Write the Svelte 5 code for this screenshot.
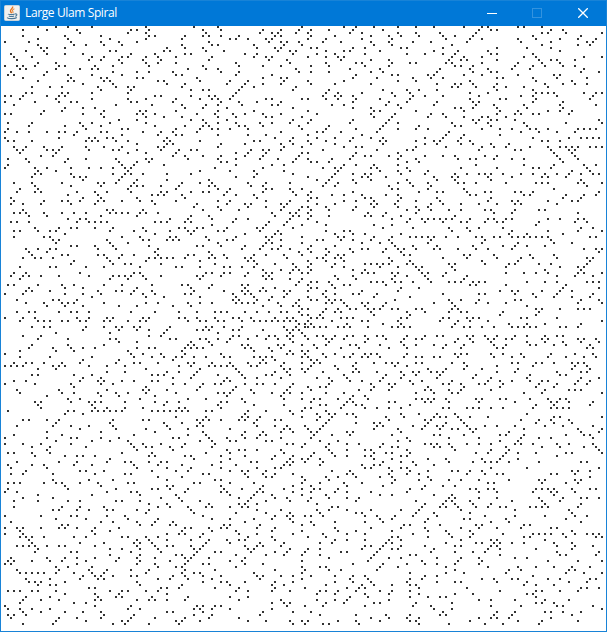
<script>
  const CELL = 3;
  const LIMIT = 40000;

  function isPrime(n) {
    if (n <= 2 || n % 2 === 0) return n === 2;
    for (let i = 3; i * i <= n; i += 2) {
      if (n % i === 0) return false;
    }
    return true;
  }

  // Walk the spiral counter-clockwise, marking each prime with a 2x2 dot.
  function ulamPath() {
    let d = '';
    let x = 300, y = 300, dx = 1, dy = 0;
    let step = 1, turn = 1;
    for (let i = 1; i < LIMIT; i++) {
      if (isPrime(i)) d += `M${x} ${y}h2v2h-2z`;
      x += dx * CELL;
      y += dy * CELL;
      if (i === turn) {
        if (dx === 0) step++;
        turn += step;
        [dx, dy] = [dy, -dx];
      }
    }
    return d;
  }

  const spiral = ulamPath();
</script>

<div class="window">
  <header class="titlebar">
    <svg class="app-icon" width="16" height="16" viewBox="0 0 16 16">
      <rect x="0.5" y="0.5" width="15" height="15" rx="1" fill="#f1f1f0" stroke="#c9d3da" />
      <path d="M8.6 1.4c.8 1.9-2.6 2.9-2.1 4.8.2.8.9 1.3 1.1 2" fill="none" stroke="#e5731f" stroke-width="1.4" />
      <path d="M10.4 3.8c-1.9.7-2.4 1.6-1.6 2.5.5.6.3 1.2-.2 1.7" fill="none" stroke="#e98a3c" stroke-width="1.1" />
      <path d="M4 9c.6.8 5.4.8 6.6 0M4.8 10.9c1.3.6 4.1.6 5.3 0M10.9 9c2.6-.7 2.6 1.8.2 2.3M3 12.6c1.6 1.4 7.8 1.4 9.8-.1" fill="none" stroke="#4b7796" stroke-width="1.1" />
    </svg>
    <span class="title">Large Ulam Spiral</span>
    <div class="controls">
      <span class="control minimize">
        <svg width="10" height="10" viewBox="0 0 10 10" shape-rendering="crispEdges"><path d="M0 5h10v1H0z" fill="#fff" /></svg>
      </span>
      <span class="control">
        <svg width="10" height="10" viewBox="0 0 10 10"><rect x="0.5" y="0.5" width="9" height="9" fill="none" stroke="#3393df" /></svg>
      </span>
      <span class="control">
        <svg width="10" height="10" viewBox="0 0 10 10"><path d="M0.2 0.2l9.6 9.6M9.8 0.2l-9.6 9.6" stroke="#fff" stroke-width="1.3" /></svg>
      </span>
    </div>
  </header>
  <svg class="plot" width="605" height="605" viewBox="0 0 605 605" shape-rendering="crispEdges">
    <path d={spiral} fill="#333" />
  </svg>
</div>

<style>
  .window {
    box-sizing: border-box;
    width: 607px;
    height: 632px;
    border: 1px solid #1883d7;
    background: #fff;
    overflow: hidden;
  }
  .titlebar {
    display: flex;
    align-items: flex-start;
    height: 25px;
    padding-left: 3px;
    background: #0078d7;
    color: #fff;
  }
  .app-icon {
    flex: none;
    margin-top: 4px;
  }
  .title {
    margin: 4px 0 0 5px;
    font: 12px/16px "Open Sans", "Noto Sans", sans-serif;
    letter-spacing: -0.38px;
    white-space: nowrap;
  }
  .controls {
    display: flex;
    margin-left: auto;
  }
  .control {
    display: flex;
    align-items: center;
    justify-content: center;
    width: 46px;
    height: 24px;
  }
  .minimize {
    width: 44px;
  }
  .plot {
    display: block;
  }
</style>
